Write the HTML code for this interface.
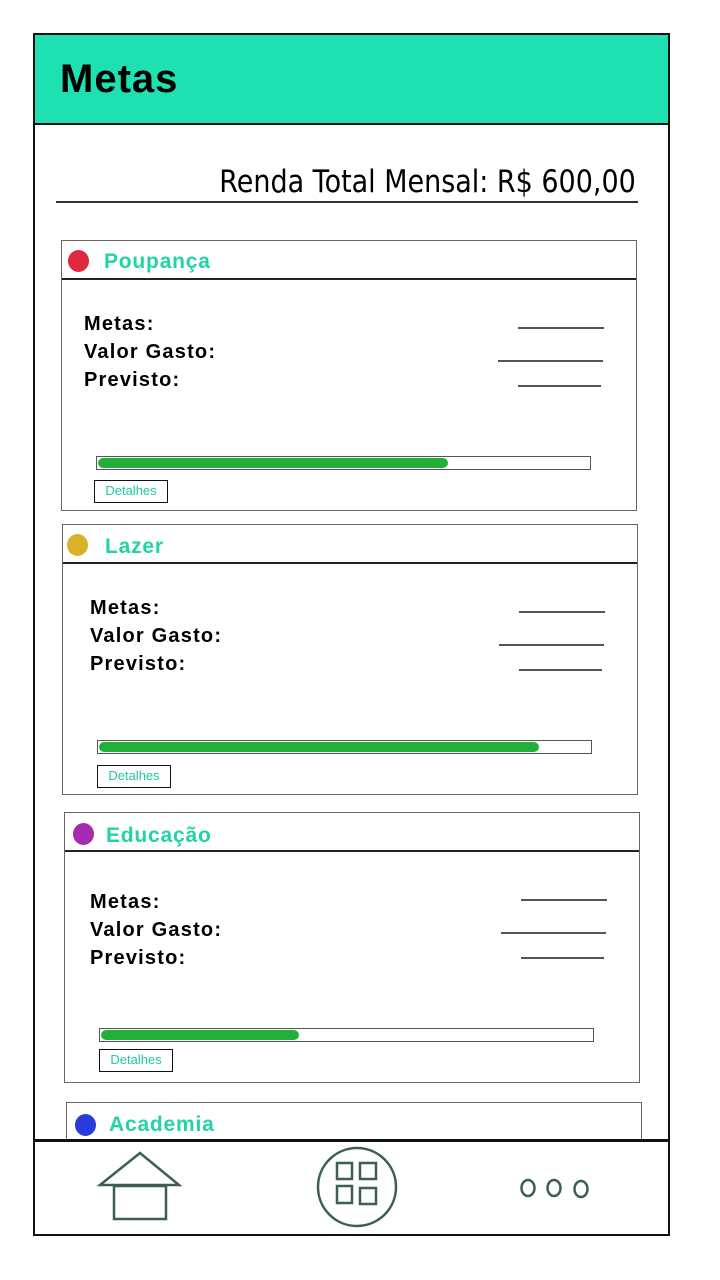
<!DOCTYPE html>
<html><head><meta charset="utf-8"><style>
*{margin:0;padding:0;box-sizing:border-box}
body{width:720px;height:1280px;background:#fff;position:relative;overflow:hidden;font-family:"Liberation Sans",sans-serif}
.a{position:absolute}
.frame{left:33px;top:33px;width:637px;height:1203px;border:2.5px solid #111}
.hdr{left:35px;top:35px;width:633px;height:90px;background:#1FE0B0;border-bottom:2px solid #111}
.ttl{left:60px;top:57px;font-size:40px;font-weight:bold;color:#000;letter-spacing:1px}
.renda{right:84px;top:164px;font-size:31px;color:#000;transform:scaleX(0.87);transform-origin:right center;white-space:nowrap;font-family:"DejaVu Sans","Liberation Sans",sans-serif}
.card{border:1.5px solid #666;background:#fff}
.hl{height:1.5px;background:#222}
.dot{border-radius:50%;width:21px;height:22px}
.ct{font-size:21px;font-weight:bold;color:#22D3A8;letter-spacing:0.8px}
.lb{font-size:20px;font-weight:bold;color:#000;line-height:28px;letter-spacing:1.2px}
.ln{height:1.5px;background:#555}
.bar{height:14px;border:1.5px solid #555;background:#fff}
.fill{height:10px;background:#22B03A;border-radius:5px}
.det{border:1.5px solid #111;font-size:13px;color:#22C9A0;text-align:center;line-height:19px}
</style></head><body>
<div class="a hdr"></div>
<div class="a frame"></div>
<div class="a ttl">Metas</div>
<div class="a renda">Renda Total Mensal: R$ 600,00</div>
<div class="a" style="left:56px;top:201px;width:582px;height:2px;background:#333"></div>

<div class="a card" style="left:61px;top:240px;width:576px;height:271px"></div>
<div class="a hl" style="left:62px;top:278px;width:574px"></div>
<div class="a dot" style="left:68px;top:250px;background:#E0283E"></div>
<div class="a ct" style="left:104px;top:250px">Poupança</div>
<div class="a lb" style="left:84px;top:310px">Metas:<br>Valor Gasto:<br>Previsto:</div>
<div class="a ln" style="left:518px;top:327px;width:86px"></div>
<div class="a ln" style="left:498px;top:360px;width:105px"></div>
<div class="a ln" style="left:518px;top:385px;width:83px"></div>
<div class="a bar" style="left:96px;top:456px;width:495px"></div>
<div class="a fill" style="left:98px;top:458px;width:350px"></div>
<div class="a det" style="left:94px;top:480px;width:74px;height:23px">Detalhes</div>

<div class="a card" style="left:62px;top:524px;width:576px;height:271px"></div>
<div class="a hl" style="left:63px;top:562px;width:574px"></div>
<div class="a dot" style="left:67px;top:534px;background:#D9B22B"></div>
<div class="a ct" style="left:105px;top:535px">Lazer</div>
<div class="a lb" style="left:90px;top:594px">Metas:<br>Valor Gasto:<br>Previsto:</div>
<div class="a ln" style="left:519px;top:611px;width:86px"></div>
<div class="a ln" style="left:499px;top:644px;width:105px"></div>
<div class="a ln" style="left:519px;top:669px;width:83px"></div>
<div class="a bar" style="left:97px;top:740px;width:495px"></div>
<div class="a fill" style="left:99px;top:742px;width:440px"></div>
<div class="a det" style="left:97px;top:765px;width:74px;height:23px">Detalhes</div>

<div class="a card" style="left:64px;top:812px;width:576px;height:271px"></div>
<div class="a hl" style="left:65px;top:850px;width:574px"></div>
<div class="a dot" style="left:73px;top:823px;background:#A62BB0"></div>
<div class="a ct" style="left:106px;top:824px">Educação</div>
<div class="a lb" style="left:90px;top:888px">Metas:<br>Valor Gasto:<br>Previsto:</div>
<div class="a ln" style="left:521px;top:899px;width:86px"></div>
<div class="a ln" style="left:501px;top:932px;width:105px"></div>
<div class="a ln" style="left:521px;top:957px;width:83px"></div>
<div class="a bar" style="left:99px;top:1028px;width:495px"></div>
<div class="a fill" style="left:101px;top:1030px;width:198px"></div>
<div class="a det" style="left:99px;top:1049px;width:74px;height:23px">Detalhes</div>

<div class="a" style="left:66px;top:1102px;width:576px;height:40px;border:1.5px solid #666;border-bottom:none"></div>
<div class="a dot" style="left:75px;top:1114px;background:#2A3BDB"></div>
<div class="a ct" style="left:109px;top:1113px">Academia</div>

<div class="a" style="left:35px;top:1139px;width:633px;height:3px;background:#111"></div>
<svg class="a" style="left:0;top:0" width="720" height="1280">
<g fill="none" stroke="#3C5F52" stroke-width="2.5">
<path d="M100 1185 L140 1153 L179 1185 Z"/>
<rect x="114" y="1186" width="52" height="33"/>
<ellipse cx="357" cy="1187" rx="39" ry="39"/>
<rect x="337" y="1163" width="15" height="16"/>
<rect x="360" y="1163" width="16" height="16"/>
<rect x="337" y="1186" width="15" height="17"/>
<rect x="360" y="1188" width="16" height="16"/>
<ellipse cx="528" cy="1188" rx="6.5" ry="8"/>
<ellipse cx="554" cy="1188" rx="6.5" ry="8"/>
<ellipse cx="581" cy="1189" rx="6.5" ry="8"/>
</g></svg>
</body></html>
